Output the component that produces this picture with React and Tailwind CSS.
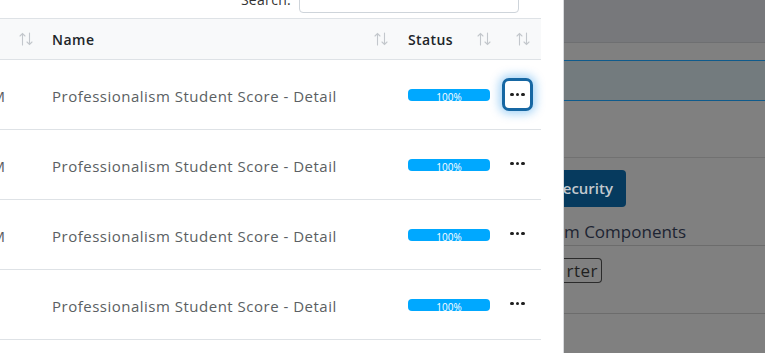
import React from 'react';

const rows = [
  { focused: true, time: 'AM' },
  { focused: false, time: 'AM' },
  { focused: false, time: 'AM' },
  { focused: false, time: '' },
];

function SortIcon() {
  return (
    <svg width="14" height="14" viewBox="0 0 14 14" fill="none" stroke="#c3c7cc" strokeWidth="1.1" strokeLinecap="round">
      <path d="M3.5 13V1.5M1 4L3.5 1.5L6 4" />
      <path d="M10.5 1V12.5M8 10L10.5 12.5L13 10" />
    </svg>
  );
}

function Dots() {
  return (
    <span className="flex items-center gap-[2px]">
      <span className="w-[3.5px] h-[3.5px] rounded-full bg-[#1f1f1f]" />
      <span className="w-[3.5px] h-[3.5px] rounded-full bg-[#1f1f1f]" />
      <span className="w-[3.5px] h-[3.5px] rounded-full bg-[#1f1f1f]" />
    </span>
  );
}

function Row({ focused, time }) {
  return (
    <div className="flex h-[70px] border-b border-[#dee2e6] items-center text-[15px] text-[#5b5f63]">
      <div className="w-[41px] overflow-hidden">
        <span className="block -ml-[18px] pt-[3px]">{time}</span>
      </div>
      <div className="w-[356px] pl-[11px] pt-[4px] tracking-[0.5px] whitespace-nowrap">Professionalism Student Score - Detail</div>
      <div className="w-[103px] pl-[11px]">
        <div className="w-[82px] h-[12px] rounded-[4px] bg-[#00a8ff] flex justify-center overflow-hidden">
          <span className="text-[10px] leading-[16px] text-white">100%</span>
        </div>
      </div>
      <div className="w-[41px] pl-[2px]">
        {focused ? (
          <button className="w-[31px] h-[33px] border-[3px] border-[#1667a3] rounded-[7px] bg-white flex items-center justify-center shadow-[0_0_10px_3px_rgba(0,132,230,0.35)]">
            <Dots />
          </button>
        ) : (
          <div className="w-[31px] h-[33px] flex items-center justify-center -mt-[2px]">
            <Dots />
          </div>
        )}
      </div>
    </div>
  );
}

export default function App() {
  return (
    <div className="flex w-[765px] h-[353px] overflow-hidden font-['Open_Sans',sans-serif]">
      <div className="w-[564px] shrink-0 bg-white border-r border-[#d8dadd] overflow-hidden">
        {/* search */}
        <div className="flex justify-end items-end gap-[8px] pr-[44px] -mt-[20px] h-[33px]">
          <span className="text-[14px] text-[#333] leading-[26px] tracking-[0.3px]">Search:</span>
          <div className="w-[220px] h-[33px] border border-[#ced4da] rounded-[4px]" />
        </div>
        {/* table */}
        <div className="w-[541px] mt-[5px] border-t border-[#dee2e6]">
          <div className="flex h-[41px] items-center bg-[#f8f9fa] border-b border-[#dee2e6] text-[14px] font-semibold text-[#212529]">
            <div className="w-[41px] flex justify-end pr-[8px]"><SortIcon /></div>
            <div className="w-[356px] pl-[11px] pr-[9px] flex justify-between items-center tracking-[0.5px]">
              <span>Name</span>
              <SortIcon />
            </div>
            <div className="w-[103px] pl-[11px] pr-[9px] flex justify-between items-center tracking-[0.4px]">
              <span>Status</span>
              <SortIcon />
            </div>
            <div className="w-[41px] flex justify-end pr-[11px]"><SortIcon /></div>
          </div>
          {rows.map((r, i) => (
            <Row key={i} focused={r.focused} time={r.time} />
          ))}
        </div>
      </div>

      {/* dimmed page behind */}
      <div className="flex-1 flex flex-col bg-[#808080]">
        <div className="h-[43px] bg-[#77787b] border-b border-[#6e6f71]" />
        <div className="h-[17px]" />
        <div className="h-[41px] bg-[#737b7e] border-y border-[#0f5b8c]" />
        <div className="h-[57px] border-b border-[#717171]" />
        <div className="pt-[12px]">
          <div className="w-[62px] h-[37px] bg-[#063a5e] rounded-r-[4px] flex items-center justify-end pr-[13px] text-[15px] font-semibold text-[#c3c9cf] overflow-hidden">
            <span className="whitespace-nowrap">ecurity</span>
          </div>
        </div>
        <div className="h-[39px] border-b border-[#6c6c6c] flex items-end pb-[1px] text-[17px] text-[#1d2432] whitespace-nowrap">
          m Components
        </div>
        <div className="pt-[12px] h-[68px] border-b border-[#6c6c6c]">
          <div className="w-[38px] h-[25px] border border-[#2b2b2b] border-l-0 rounded-r-[4px] flex items-center justify-end pr-[3px] text-[17px] tracking-[0.5px] text-[#1f1f1f] overflow-hidden">
            rter
          </div>
        </div>
      </div>
    </div>
  );
}
